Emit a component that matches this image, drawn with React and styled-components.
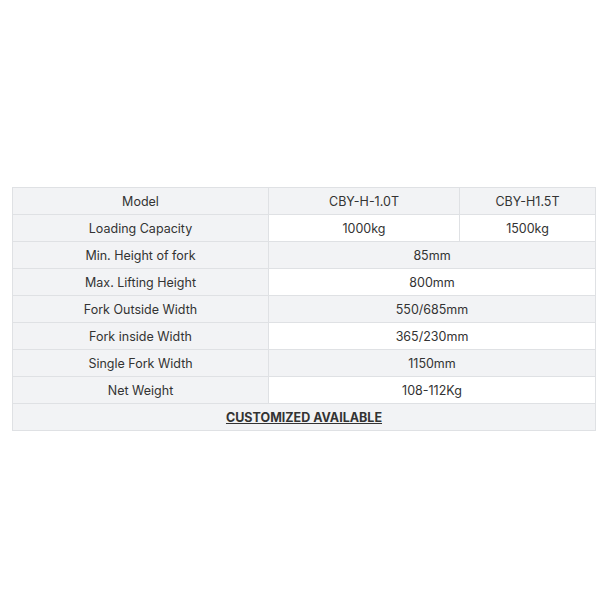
import React from "react";
import styled, { createGlobalStyle } from "styled-components";

const Global = createGlobalStyle`
  html, body { margin: 0; padding: 0; background: #fff; }
  body { font-family: Inter, "Noto Sans", sans-serif; }
`;

const Page = styled.div`
  padding: 187px 0 0 12px;
  width: 600px;
  box-sizing: border-box;
`;

const Table = styled.table`
  width: 583px;
  border-collapse: collapse;
  table-layout: fixed;
  font-size: 12.5px;
  color: #333;
  border: 1px solid #dfe1e4;
`;

const Row = styled.tr`
  height: 27px;
  background: ${(p) => (p.$striped ? "#f2f3f5" : "#fff")};
`;

const Cell = styled.td`
  border: 1px solid #dfe1e4;
  text-align: center;
  padding: 0 6px;
  background: ${(p) => (p.$head ? "#f2f3f5" : "transparent")};
  font-weight: ${(p) => (p.$bold ? 700 : 400)};
  text-decoration: ${(p) => (p.$bold ? "underline" : "none")};
`;

const rows = [
  ["Model", "CBY-H-1.0T", "CBY-H1.5T"],
  ["Loading Capacity", "1000kg", "1500kg"],
  ["Min. Height of fork", "85mm"],
  ["Max. Lifting Height", "800mm"],
  ["Fork Outside Width", "550/685mm"],
  ["Fork inside Width", "365/230mm"],
  ["Single Fork Width", "1150mm"],
  ["Net Weight", "108-112Kg"],
];

export default function App() {
  return (
    <Page>
      <Global />
      <Table>
        <colgroup>
          <col style={{ width: 256 }} />
          <col style={{ width: 191 }} />
          <col style={{ width: 136 }} />
        </colgroup>
        <tbody>
          {rows.map((r, i) => (
            <Row key={i} $striped={i % 2 === 0}>
              <Cell $head>{r[0]}</Cell>
              {r.length === 3 ? (
                <>
                  <Cell>{r[1]}</Cell>
                  <Cell>{r[2]}</Cell>
                </>
              ) : (
                <Cell colSpan={2}>{r[1]}</Cell>
              )}
            </Row>
          ))}
          <Row $striped>
            <Cell colSpan={3} $bold>CUSTOMIZED AVAILABLE</Cell>
          </Row>
        </tbody>
      </Table>
    </Page>
  );
}
